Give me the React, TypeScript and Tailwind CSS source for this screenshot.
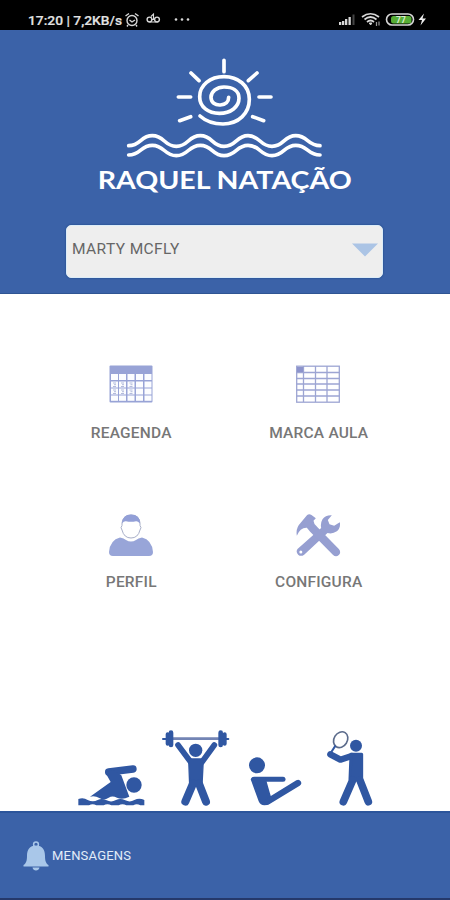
import type { ReactNode } from 'react';

const CalendarIcon = () => (
  <svg className="w-11 h-[38px]" viewBox="0 0 44 38">
    <rect x="0.5" y="0.5" width="43" height="37" rx="1" fill="#98a3d6" />
    {[9, 16.5, 23.5, 30.5].map((y, r) =>
      [2, 10, 18.5, 27, 35.5].map((x, c) => (
        <g key={`${r}-${c}`}>
          <rect x={x} y={y} width="7" height={r === 3 ? 5.3 : 6} fill="#fcfdff" />
          {c < 3 && (r === 1 || r === 2) && (
            <path d={`M${x + 2} ${y + 1.5}h3M${x + 3} ${y + 3.2}h2M${x + 2} ${y + 5}h3`} stroke="#aab3d8" strokeWidth="0.9" />
          )}
        </g>
      )),
    )}
  </svg>
);

const TableIcon = () => (
  <svg className="w-11 h-[38px]" viewBox="0 0 44 38" fill="none" stroke="#9da5d3">
    <rect x="0.7" y="1.2" width="42.6" height="36" strokeWidth="1.3" />
    <path d="M0 7.5h44M0 13.5h44M0 19h44M0 25h44M0 31h44M7.5 1v36M19.5 1v36M31 1v36" strokeWidth="1.3" />
    <path d="M1 2h6v5H1z" fill="#8d94cc" stroke="none" />
  </svg>
);

const ProfileIcon = () => (
  <svg className="w-11 h-[43px]" viewBox="0 0 44 43">
    <path
      d="M11 23.5 Q15 24 17 26 Q22 29 27 26 Q29 24 33 23.5 Q43 26 44 38 Q44 42 40 42 H4 Q0 42 0 38 Q1 26 11 23.5Z"
      fill="#98a5d8"
    />
    <path
      d="M13 9 Q14 1.2 22 1 Q30.5 1.2 31 9 L31 11.5 Q33 13.5 31 16 Q29 24 22 24 Q15 24 13 16 Q11 13.5 13 11.5Z"
      fill="#fff"
      stroke="#a8afc8"
      strokeWidth="1"
    />
    <path d="M13 9.5 Q13.5 .5 22 .5 Q31 .5 31 9.5 Q28.5 6.8 27 7.2 Q22 8.5 17 7.2 Q15 6.8 13 9.5Z" fill="#929fd7" />
  </svg>
);

const ToolsIcon = () => (
  <svg className="w-[45px] h-[43px]" viewBox="108 38 134 129" fill="#969fd1">
    <path d="M112 143 L183 80 Q180 66 187 54 Q196 41 215 42 L203 56 L208 69 L222 73 L239 63 Q242 80 230 90 Q217 99 202 95 L132 160 Q122 167 114 160 Q106 152 112 143Z" />
    <path d="M110 103 Q106 80 121 65 L141 41 Q147 36 154 41 L167 51 L160 58 L163 68 L172 78 L236 143 Q244 153 236 161 Q227 169 218 160 L150 91 L140 79 Q120 78 110 103Z" />
    <circle cx="122" cy="152" r="4.5" fill="#fff" />
  </svg>
);

const Logo = () => (
  <svg className="w-[270px] h-[150px]" viewBox="0 0 810 450" fill="none" stroke="#fff" strokeWidth="11" strokeLinecap="round">
    <path d="M330 198 C350 216 371 222 399 222 C446 222 478 190 478 148 C478 106 444 80 402 80 C360 80 329 106 329 140 C329 171 355 190 388 190 C423 190 447 170 447 145 C447 122 427 111 402 111 C380 111 363 125 363 142 C363 158 376 166 391 165 C407 164 416 155 416 142" />
    <path d="M402 31V65M303 69L327 92M501 69L475 92M265 141H302M507 141H543M269 212L302 200M488 200L521 212" />
    <path d="M116 287 C153 287 151 257 187 257 C224 257 222 289 259 289 C296 289 294 257 331 257 C368 257 366 289 402 289 C440 289 438 257 474 257 C511 257 509 289 546 289 C583 289 581 257 617 257 C654 257 652 287 690 287" />
    <path d="M116 315 C153 315 151 286 187 286 C224 286 222 317 259 317 C296 317 294 286 331 286 C368 286 366 317 402 317 C440 317 438 286 474 286 C511 286 509 317 546 317 C583 317 581 286 617 286 C654 286 652 315 690 315" />
    <text
      x="23"
      y="416"
      textLength="762"
      lengthAdjust="spacingAndGlyphs"
      className="font-['Lato',sans-serif] font-bold text-[76px]"
      fill="#fff"
      stroke="none"
    >
      RAQUEL NATAÇÃO
    </text>
  </svg>
);

const Athletes = () => (
  <div className="flex pl-[70px] text-[#3057a2]">
    <svg className="w-[87px] h-[91px]" viewBox="0 0 261 273" fill="currentColor" stroke="currentColor">
      <circle cx="192" cy="195" r="23" stroke="none" />
      <path d="M116 156L189 147" strokeWidth="22" strokeLinecap="round" fill="none" />
      <path d="M105 156L122 186L60 230Q75 226 88 234Q102 242 116 233Q127 226 141 233Q157 240 178 230L154 166L132 151Z" stroke="none" />
      <path
        d="M25 237 Q41 232 53 240 Q69 248 83 240 Q96 233 110 241 Q124 248 138 240 Q151 233 166 241 Q180 248 193 240 Q208 233 223 240 V256 H211 Q200 250 190 256 H169 Q157 250 146 256 H124 Q112 250 101 256 H79 Q68 250 57 256 H25Z"
        stroke="none"
      />
    </svg>
    <svg className="w-[78px] h-[91px]" viewBox="261 0 234 273" fill="none" stroke="currentColor" strokeLinecap="round">
      <path d="M310 56H445" stroke="#7384b4" strokeWidth="8" />
      <path d="M279 57H292M464 57H475" strokeWidth="6" />
      <path d="M293 43V71M464 43V71" strokeWidth="12" />
      <path d="M303 38V75M452 38V75" strokeWidth="14" />
      <circle cx="377" cy="91" r="20" fill="currentColor" stroke="none" />
      <path d="M324 75L362 126M433 75L396 126" strokeWidth="17" />
      <path d="M356 117H400L396 195H359Z" fill="currentColor" strokeWidth="4" />
      <path d="M369 191L346 245M387 191L408 245" strokeWidth="24" />
    </svg>
    <svg className="w-[85px] h-[91px]" viewBox="0 0 255 273" fill="none" stroke="currentColor" strokeLinecap="round">
      <circle cx="66" cy="136" r="24" fill="currentColor" stroke="none" />
      <path d="M57 178H144" strokeWidth="15" />
      <path d="M47 178Q49 171 57 171H91L104 217L110 237Q108 256 88 256Q76 256 71 244Z" fill="currentColor" stroke="none" />
      <path d="M99 244L189 189" strokeWidth="19" />
    </svg>
    <svg className="w-[65px] h-[91px]" viewBox="255 0 195 273" fill="none" stroke="currentColor" strokeLinecap="round" strokeLinejoin="round">
      <ellipse cx="317" cy="59" rx="20" ry="25" transform="rotate(32 317 59)" stroke="#5b6b8b" strokeWidth="5" />
      <path d="M300 79L287 99" strokeWidth="6" />
      <circle cx="363" cy="77" r="18" fill="currentColor" stroke="none" />
      <path d="M286 103L316 119L350 108" strokeWidth="19" />
      <path d="M348 103H380V178H345Z" fill="currentColor" strokeWidth="9" />
      <path d="M353 181L325 245M375 181L400 245" strokeWidth="23" />
    </svg>
  </div>
);

const StatusBar = () => (
  <div className="h-[30px] shrink-0 bg-black">
    <svg className="w-[450px] h-[30px]" viewBox="0 0 450 30" fill="none" stroke="#d8d8d8">
      <text
        x="28"
        y="25"
        textLength="94"
        lengthAdjust="spacingAndGlyphs"
        className="font-['Roboto',sans-serif] font-medium text-[13px]"
        fill="#e2e2e2"
        stroke="#e2e2e2"
        strokeWidth="0.2"
      >
        17:20 | 7,2KB/s
      </text>
      <g strokeWidth="1.4">
        <circle cx="132" cy="20.5" r="5" />
        <path d="M125.5 16L129 13.5M138.5 16L135 13.5M129.5 20L132 22L135 20M128 25L127 26.5M136 25L137 26.5" />
        <circle cx="149.5" cy="19.5" r="2.4" />
        <circle cx="157" cy="19.5" r="2.4" />
        <path d="M149 22H158M153.5 19V14L151 16.5M151.5 19.5H155" strokeWidth="1.1" />
      </g>
      <g fill="#d8d8d8" stroke="none">
        <circle cx="176" cy="19.5" r="1.3" />
        <circle cx="182" cy="19.5" r="1.3" />
        <circle cx="188" cy="19.5" r="1.3" />
        <path d="M339 22h2.3v3h-2.3zM342 21h2.3v4h-2.3zM345 19h2.3v6h-2.3zM348.5 17h2.3v8h-2.3z" />
        <path d="M352.5 14.5h2V25h-2z" fill="#444" />
      </g>
      <path d="M362 17Q370.5 10.5 379 17M364.5 19.5Q370.5 14.5 376.5 19.5M367 22Q370.5 19 374 22" strokeWidth="1.7" />
      <path d="M369.3 23h2.6l-1.3 2z" fill="#d8d8d8" />
      <path d="M376.5 22v4M379 21.5v4" strokeWidth="1.2" stroke="#999" />
      <rect x="386.5" y="14" width="27" height="11" rx="5.5" strokeWidth="1.6" />
      <rect x="391" y="16" width="20.5" height="7.5" rx="2.5" fill="#56ad35" stroke="none" />
      <text x="396" y="23" className="font-['Roboto',sans-serif] font-bold text-[8.5px]" fill="#d9efcd" stroke="none">
        77
      </text>
      <path d="M424 13.5L418.5 20H422L420.5 25.5L426 18.5H422.5Z" fill="#eee" stroke="none" />
    </svg>
  </div>
);

const MenuItem = ({ icon, label }: { icon: ReactNode; label: string }) => (
  <button className="flex h-[149px] flex-col items-center">
    <span className="flex h-[43px] items-start">{icon}</span>
    <span className="mt-[15px] pl-px text-[15.5px] leading-5 font-medium tracking-[0.2px] text-[#777]">{label}</span>
  </button>
);

export default function App() {
  return (
    <div className="flex h-[900px] w-[450px] flex-col overflow-hidden bg-white font-['Roboto',sans-serif]">
      <StatusBar />

      <header className="flex h-[264px] shrink-0 flex-col items-center border-b border-[#2f5593] bg-[#3b62a8] pt-5">
        <Logo />
        <button className="mt-[25px] mr-px flex h-[53px] w-[317px] items-start justify-between rounded-[5px] border border-[#dcecf8] bg-[#eee] pt-[13px] pr-[4px] pl-[5px] shadow-[0_0_2px_#17407e]">
          <span className="text-[15.5px] leading-5 tracking-[0.4px] text-[#666]">MARTY MCFLY</span>
          <svg className="mt-1 h-[14px] w-[26px]" viewBox="0 0 26 14">
            <path d="M0 0.5H26L13 13.5Z" fill="#abc4e5" />
          </svg>
        </button>
      </header>

      <main className="flex h-[517px] shrink-0 flex-col justify-between">
        <div className="mr-[38px] ml-[37px] grid grid-cols-2 pt-[71px]">
          <MenuItem icon={<CalendarIcon />} label="REAGENDA" />
          <MenuItem icon={<TableIcon />} label="MARCA AULA" />
          <MenuItem icon={<ProfileIcon />} label="PERFIL" />
          <MenuItem icon={<ToolsIcon />} label="CONFIGURA" />
        </div>
        <Athletes />
      </main>

      <footer className="flex h-[89px] shrink-0 items-center gap-[3px] border-t-2 border-b-2 border-t-[#2c559b] border-b-[#25396b] bg-[#3b62a8] pl-[23px]">
        <svg className="h-[30px] w-[26px]" viewBox="0 0 26 30" fill="#a9c7e9">
          <circle cx="13" cy="3.5" r="2.4" fill="none" stroke="#a9c7e9" strokeWidth="1.5" />
          <path d="M13 4.5C6.5 4.5 4 9 4 15C4 20 3 22.5 0.5 24V25.5H25.5V24C23 22.5 22 20 22 15C22 9 19.5 4.5 13 4.5ZM9.5 26.5C10 30.5 16 30.5 16.5 26.5Z" />
        </svg>
        <span className="text-[13px] leading-5 tracking-[0.2px] text-[#e2ecf8]">MENSAGENS</span>
      </footer>
    </div>
  );
}
